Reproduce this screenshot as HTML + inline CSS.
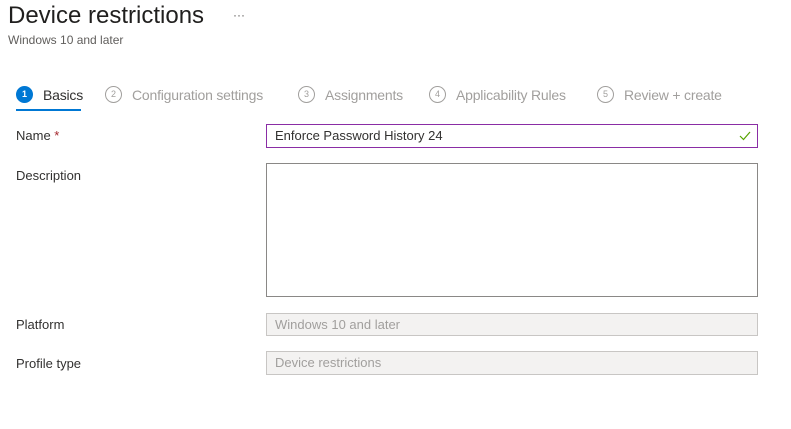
<!DOCTYPE html><html><head><style>
body{margin:0;width:791px;height:429px;background:#fff;font-family:"Liberation Sans",sans-serif;color:#323130;position:relative;overflow:hidden}
.a{position:absolute;white-space:nowrap}
.c{position:absolute;width:15px;height:15px;border:1px solid #a19f9d;border-radius:50%;font-size:9px;color:#a19f9d;text-align:center;line-height:15px;top:86px}
.t{position:absolute;top:87px;font-size:14px;color:#a19f9d;line-height:16px;letter-spacing:-0.2px}
.l{position:absolute;left:16px;font-size:13px;color:#323130}
.box{position:absolute;left:266px;width:492px;box-sizing:border-box;border:1px solid #8a8886;background:#fff;font-size:13px;padding-left:8px}
</style></head><body>
<div class="a" style="left:8px;top:2px;font-size:24px;color:#201f1e">Device restrictions</div>
<div class="a" style="left:233px;top:8px;font-size:12px;color:#605e5c">···</div>
<div class="a" style="left:8px;top:33px;font-size:12px;color:#605e5c">Windows 10 and later</div>
<div class="c" style="left:16px;background:#0078d4;border-color:#0078d4;color:#fff;font-weight:bold">1</div>
<div class="t" style="left:43px;color:#323130">Basics</div>
<div class="a" style="left:16px;top:109px;width:65px;height:2px;background:#0078d4"></div>
<div class="c" style="left:105px">2</div><div class="t" style="left:132px">Configuration settings</div>
<div class="c" style="left:298px">3</div><div class="t" style="left:325px">Assignments</div>
<div class="c" style="left:429px">4</div><div class="t" style="left:456px">Applicability Rules</div>
<div class="c" style="left:597px">5</div><div class="t" style="left:624px">Review + create</div>
<div class="l" style="top:128px">Name <span style="color:#a4262c">*</span></div>
<div class="box" style="top:124px;height:24px;line-height:22px;border-color:#8a2da5;color:#323130">Enforce Password History 24<svg style="position:absolute;right:6px;top:6px" width="12" height="10" viewBox="0 0 12 10"><path d="M1 5l3.5 3.5L11 1" fill="none" stroke="#57a300" stroke-width="1.2"/></svg></div>
<div class="l" style="top:168px">Description</div>
<div class="box" style="top:163px;height:134px"></div>
<div class="l" style="top:317px">Platform</div>
<div class="box" style="top:313px;height:23px;line-height:21px;background:#f3f2f1;border-color:#c8c6c4;color:#a19f9d">Windows 10 and later</div>
<div class="l" style="top:356px">Profile type</div>
<div class="box" style="top:351px;height:24px;line-height:22px;background:#f3f2f1;border-color:#c8c6c4;color:#a19f9d">Device restrictions</div>
</body></html>
